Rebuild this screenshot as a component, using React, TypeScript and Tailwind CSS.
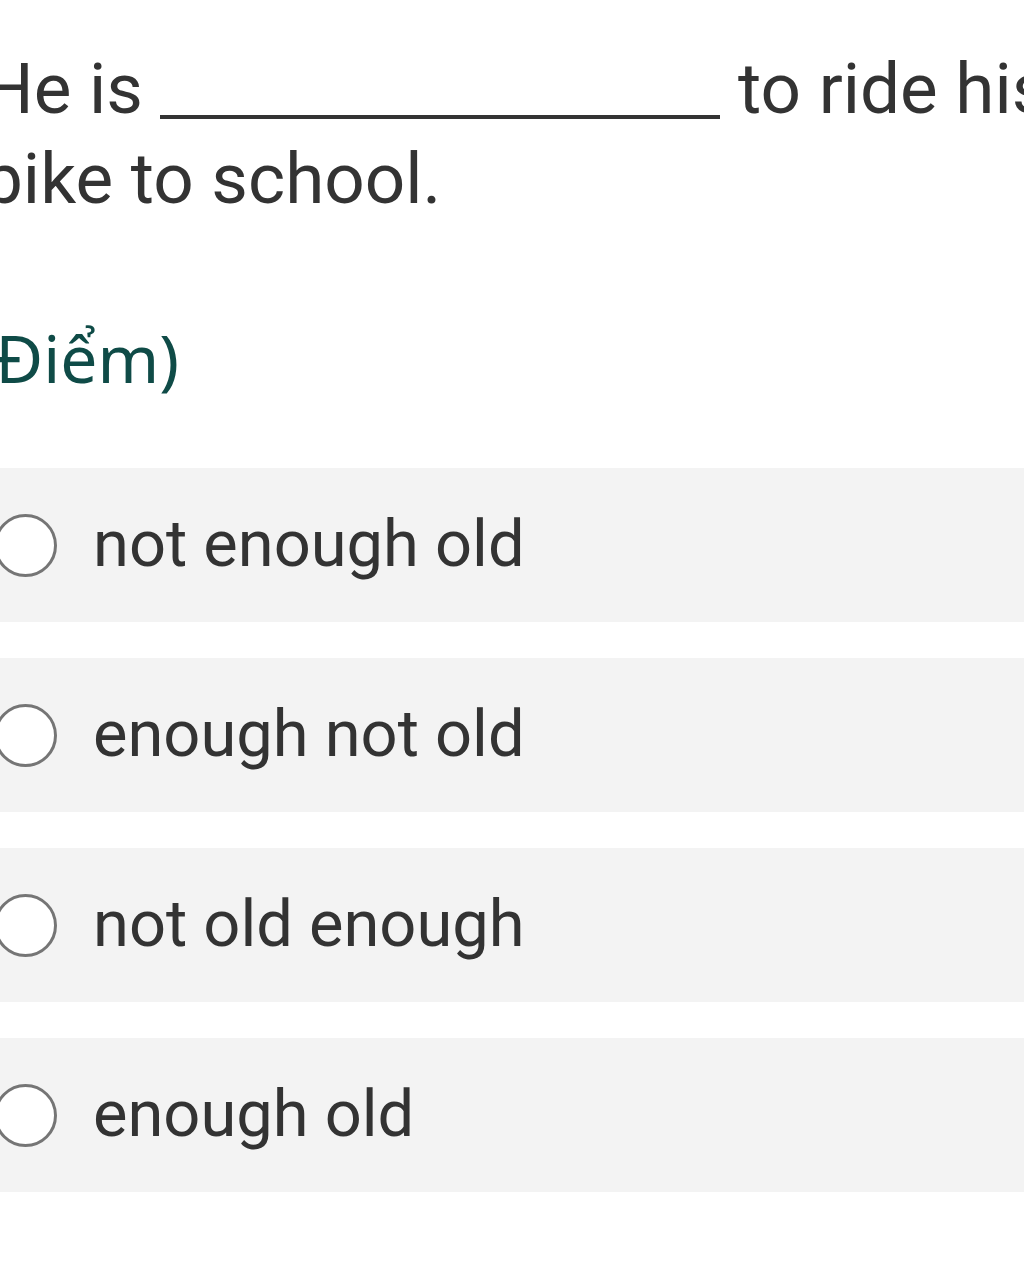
const options = ['not enough old', 'enough not old', 'not old enough', 'enough old'];

function Radio() {
  return <div className="w-[63px] h-[63px] shrink-0 rounded-full border-[3px] border-[#757575] bg-white" />;
}

export default function App() {
  return (
    <div className="w-[1024px] h-[1279px] overflow-hidden bg-white" style={{ fontFamily: 'Roboto, "Liberation Sans", sans-serif' }}>
      <div className="w-[1120px] -ml-[17px] pt-[44px] text-[71px] leading-[90px] text-[#333333]">
        He is{' '}
        <span className="inline-block w-[560px] h-0 border-b-[4px] border-[#333333] -mb-[6px]" />{' '}
        to ride his bike to school.
      </div>

      <div
        className="-ml-[5px] mt-[93px] text-[66px] leading-[80px] text-[#0f4b47]"
        style={{ fontFamily: '"Noto Sans", "Open Sans", sans-serif' }}
      >
        Điểm)
      </div>

      <div className="mt-[71px] flex flex-col gap-[36px]">
        {options.map((o) => (
          <div key={o} className="h-[154px] bg-[#f3f3f3] flex items-center -ml-[6px]">
            <Radio />
            <span className="ml-[36px] text-[65px] text-[#333333]">{o}</span>
          </div>
        ))}
      </div>
    </div>
  );
}
